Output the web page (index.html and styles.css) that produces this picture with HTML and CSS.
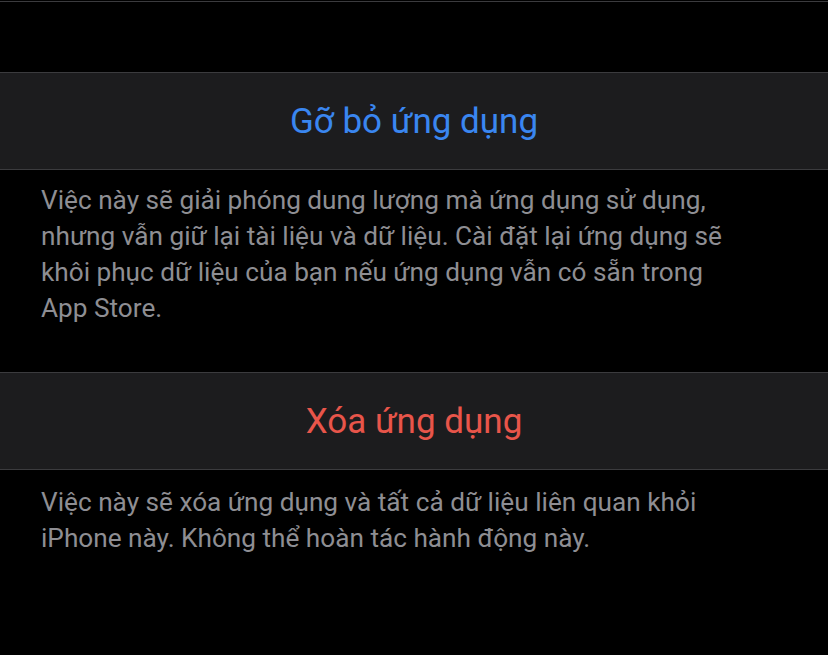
FILE: index.html
```html
<!DOCTYPE html>
<html lang="vi">
<head>
<meta charset="utf-8">
<title>Ứng dụng</title>
<link rel="stylesheet" href="styles.css">
</head>
<body>
  <div class="top-rule"></div>
  <section class="group">
    <button class="action action-blue">Gỡ bỏ ứng dụng</button>
    <p class="footer">Việc này sẽ giải phóng dung lượng mà ứng dụng sử dụng, nhưng vẫn giữ lại tài liệu và dữ liệu. Cài đặt lại ứng dụng sẽ khôi phục dữ liệu của bạn nếu ứng dụng vẫn có sẵn trong App Store.</p>
  </section>
  <section class="group">
    <button class="action action-red">Xóa ứng dụng</button>
    <p class="footer">Việc này sẽ xóa ứng dụng và tất cả dữ liệu liên quan khỏi iPhone này. Không thể hoàn tác hành động này.</p>
  </section>
</body>
</html>
```

FILE: styles.css
```css
html, body {
  margin: 0;
  padding: 0;
  background: #000;
  font-family: Roboto, "Noto Sans", sans-serif;
}

.top-rule {
  height: 1px;
  margin-top: 1px;
  background: #3b3b3e;
  margin-bottom: 70px;
}

.group {
  display: flex;
  flex-direction: column;
}

.action {
  display: block;
  width: 100%;
  height: 98px;
  margin: 0;
  padding: 0;
  border: 0;
  border-top: 1px solid #3b3b3e;
  border-bottom: 1px solid #3b3b3e;
  background: #1c1c1e;
  font-family: inherit;
  font-size: 35px;
  text-align: center;
  cursor: pointer;
}

.action-blue { color: #3a86f0; }
.action-red { color: #e8554a; }

.footer {
  margin: 0;
  padding: 12px 90px 0 41px;
  height: 190px;
  font-size: 26.2px;
  line-height: 36px;
  color: #8e8e93;
}

.group + .group .footer {
  padding-top: 14px;
}
```
